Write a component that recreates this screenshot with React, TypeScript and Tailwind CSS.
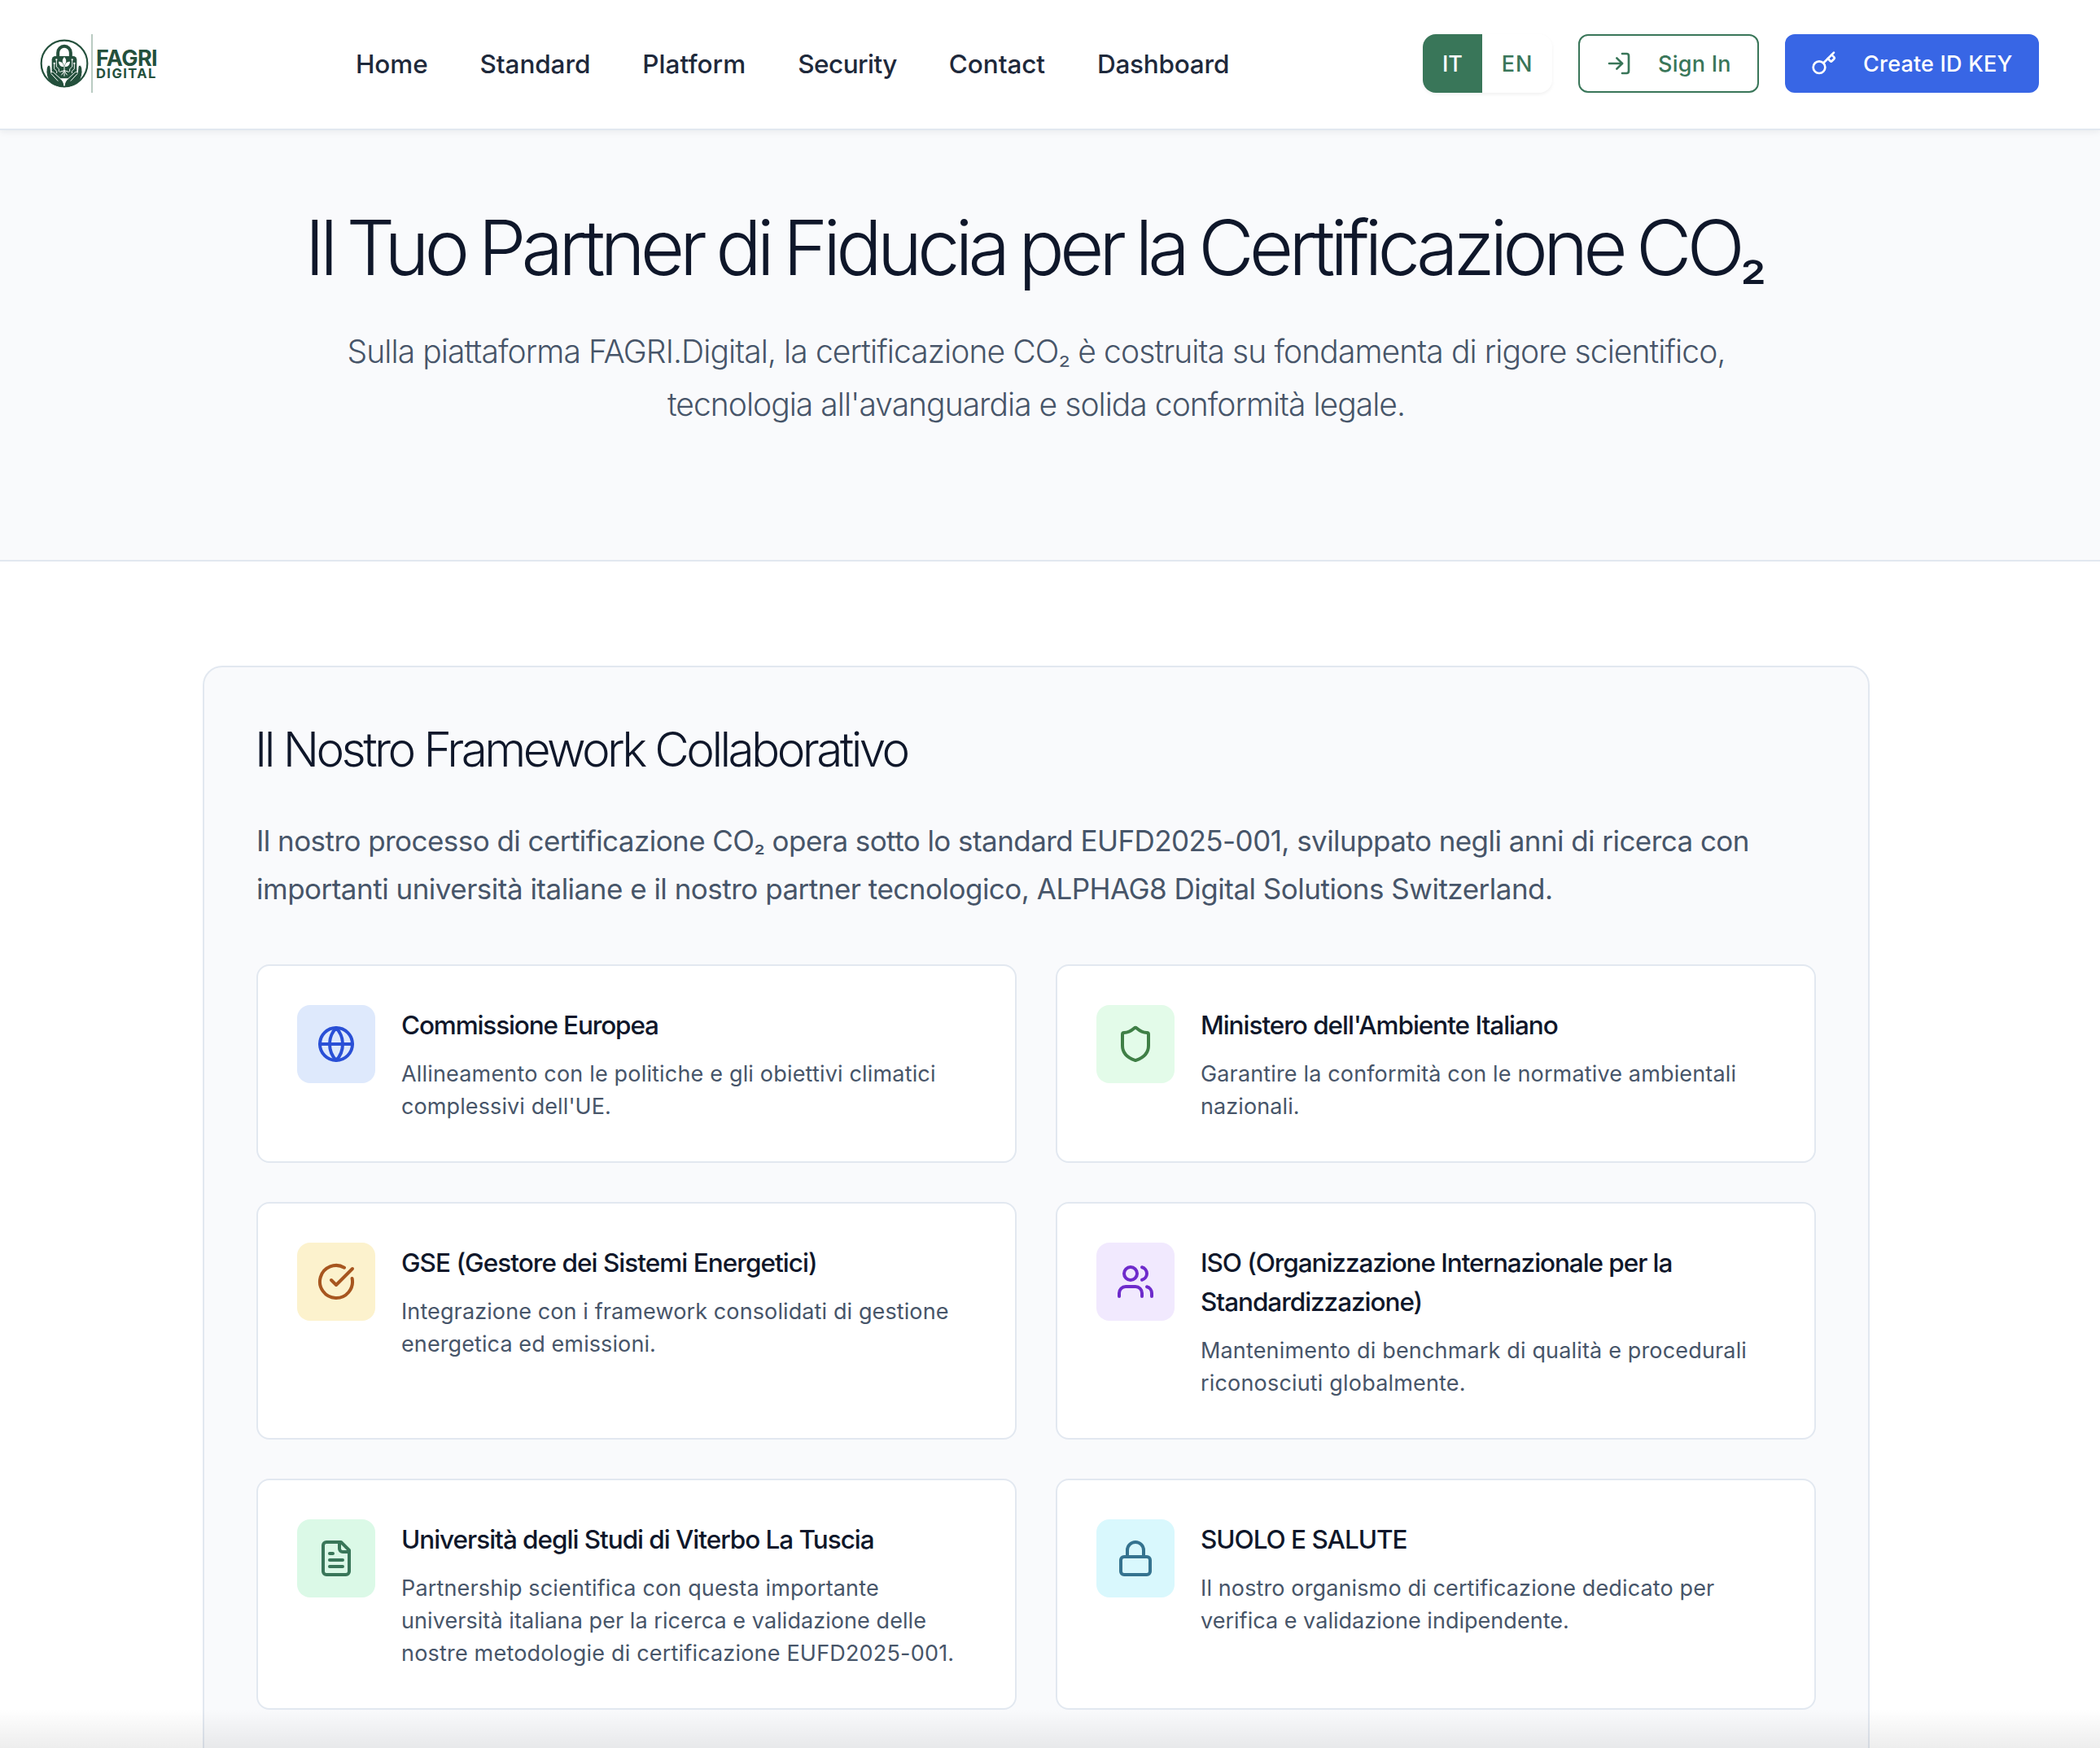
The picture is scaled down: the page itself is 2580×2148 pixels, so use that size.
import type { ReactNode } from "react";
import { CircleCheckBig, Globe, Key, Lock, LogIn, Shield, Users } from "lucide-react";

type Line = { text: string; tracking: string };

function Lines({ lines }: { lines: Line[] }) {
  return (
    <>
      {lines.map((line) => {
        const [before, after] = line.text.split("₂");
        return (
          <span key={line.text} className={`block whitespace-nowrap ${line.tracking}`}>
            {before}
            {after !== undefined && <span className="text-[0.86em] leading-none">₂</span>}
            {after}
          </span>
        );
      })}
    </>
  );
}

function FileIcon() {
  return (
    <svg
      viewBox="0 0 24 24"
      className="size-12"
      fill="none"
      stroke="currentColor"
      strokeWidth="2"
      strokeLinecap="round"
      strokeLinejoin="round"
    >
      <path d="M15 2H6a2 2 0 0 0-2 2v16a2 2 0 0 0 2 2h12a2 2 0 0 0 2-2V7Z" />
      <path d="M14 2v4a2 2 0 0 0 2 2h4" />
      <path d="M10 9H8" />
      <path d="M16 13H8" />
      <path d="M16 17H8" />
    </svg>
  );
}

function LogoMark() {
  return (
    <svg viewBox="26 36 180 180" className="size-[60px]" fill="none" strokeLinecap="round" strokeLinejoin="round">
      {/* padlock */}
      <path d="M92.500 106V86a23.500 23.500 0 0 1 47 0v20" stroke="#24503c" strokeWidth="12" />
      <rect x="70" y="99" width="92" height="82" rx="13" fill="#24503c" />
      {/* hands */}
      <g fill="#24503c" stroke="#fff" strokeWidth="3">
        <path d="M53 136c4-5 11-4 12 4l2 20c2-3 8-4 12 1l24 22c8 7 13 15 13 27v5c-28 0-50-12-61-34c-6-14-7-32-2-45Z" />
        <path d="M179 136c-4-5-11-4-12 4l-2 20c-2-3-8-4-12 1l-24 22c-8 7-13 15-13 27v5c28 0 50-12 61-34c6-14 7-32 2-45Z" />
      </g>
      <path d="M68 164l24 26M164 164l-24 26" stroke="#fff" strokeWidth="3" />
      <circle cx="116" cy="126" r="85" stroke="#24503c" strokeWidth="6.5" />
      <path d="M106 184q9 6 10 24q1-18 10-24" fill="#fff" stroke="#fff" strokeWidth="3" />
      {/* plant */}
      <path d="M116 102c9 10 9 20 0 30c-9-10-9-20 0-30Z" fill="#fff" />
      <path d="M95 119c12 0 18 6 19 19c-12 0-18-7-19-19ZM137 119c-12 0-18 6-19 19c12 0 18-7 19-19Z" fill="#fff" />
      <path d="M116 130v42M116 152l-16 5M116 152l16 5M115 155l-9 13M117 155l9 13" stroke="#fff" strokeWidth="3" />
      {/* circuit traces */}
      <path
        d="M87 114v24l9 8v9M79 128v18l9 8v7M145 114v24l-9 8v9M153 128v18l-9 8v7"
        stroke="#fff"
        strokeWidth="2.8"
      />
      <circle cx="87" cy="112" r="3.4" fill="#fff" />
      <circle cx="79" cy="126" r="3.4" fill="#fff" />
      <circle cx="145" cy="112" r="3.4" fill="#fff" />
      <circle cx="153" cy="126" r="3.4" fill="#fff" />
    </svg>
  );
}

const nav = [
  { label: "Home", tracking: "tracking-[-0.1px]" },
  { label: "Standard", tracking: "tracking-[-0.1px]" },
  { label: "Platform", tracking: "tracking-[0.05px]" },
  { label: "Security", tracking: "tracking-[-0.55px]" },
  { label: "Contact", tracking: "tracking-[-0.1px]" },
  { label: "Dashboard", tracking: "tracking-[-0.23px]" },
];

type Partner = { icon: ReactNode; tone: string; title: Line[]; body: Line[] };

const partners: Partner[] = [
  {
    icon: <Globe className="size-12" />,
    tone: "bg-[#dee9fc] text-[#2a50d6]",
    title: [{ text: "Commissione Europea", tracking: "tracking-[-1.14px]" }],
    body: [
      { text: "Allineamento con le politiche e gli obiettivi climatici", tracking: "tracking-[0.175px]" },
      { text: "complessivi dell'UE.", tracking: "tracking-[0.1px]" },
    ],
  },
  {
    icon: <Shield className="size-12" />,
    tone: "bg-[#e3fbe9] text-[#3f7f46]",
    title: [{ text: "Ministero dell'Ambiente Italiano", tracking: "tracking-[-1.03px]" }],
    body: [
      { text: "Garantire la conformità con le normative ambientali", tracking: "tracking-[0.15px]" },
      { text: "nazionali.", tracking: "tracking-[0.1px]" },
    ],
  },
  {
    icon: <CircleCheckBig className="size-12" />,
    tone: "bg-[#fcf2cd] text-[#a7561f]",
    title: [{ text: "GSE (Gestore dei Sistemi Energetici)", tracking: "tracking-[-0.956px]" }],
    body: [
      { text: "Integrazione con i framework consolidati di gestione", tracking: "tracking-[0.11px]" },
      { text: "energetica ed emissioni.", tracking: "tracking-[0.1px]" },
    ],
  },
  {
    icon: <Users className="size-12" />,
    tone: "bg-[#f1e9fe] text-[#6e2bcb]",
    title: [
      { text: "ISO (Organizzazione Internazionale per la", tracking: "tracking-[-1.07px]" },
      { text: "Standardizzazione)", tracking: "tracking-[-1.04px]" },
    ],
    body: [
      { text: "Mantenimento di benchmark di qualità e procedurali", tracking: "tracking-[0.16px]" },
      { text: "riconosciuti globalmente.", tracking: "tracking-[0.18px]" },
    ],
  },
  {
    icon: <FileIcon />,
    tone: "bg-[#dbf9e7] text-[#397659]",
    title: [{ text: "Università degli Studi di Viterbo La Tuscia", tracking: "tracking-[-1.03px]" }],
    body: [
      { text: "Partnership scientifica con questa importante", tracking: "tracking-[0.15px]" },
      { text: "università italiana per la ricerca e validazione delle", tracking: "tracking-[0.07px]" },
      { text: "nostre metodologie di certificazione EUFD2025-001.", tracking: "tracking-[0.19px]" },
    ],
  },
  {
    icon: <Lock className="size-12" />,
    tone: "bg-[#d9f8fd] text-[#35738f]",
    title: [{ text: "SUOLO E SALUTE", tracking: "tracking-[-1.03px]" }],
    body: [
      { text: "Il nostro organismo di certificazione dedicato per", tracking: "tracking-[0.126px]" },
      { text: "verifica e validazione indipendente.", tracking: "tracking-[0.027px]" },
    ],
  },
];

function Header() {
  return (
    <header className="relative flex h-[160px] items-start border-b-2 border-[#e2e8f0] bg-white pt-[42px] shadow-[0_2px_8px_rgba(15,23,42,0.07)]">
      <a className="ml-[49px] flex h-[72px] w-[388px] items-center">
        <LogoMark />
        <span className="ml-[3px] h-[72px] w-[2px] bg-[#b9cbc2]" />
        <span className="ml-[4px] flex flex-col pt-[2px] font-bold text-[#24503c]">
          <span className="text-[27px] leading-[23px] tracking-[-0.6px]">FAGRI</span>
          <span className="text-[16.5px] leading-[15px] tracking-[1.43px]">DIGITAL</span>
        </span>
      </a>
      <nav className="flex h-[74px] items-center gap-16 text-[31.5px] font-medium text-[#1e293b]">
        {nav.map((item) => (
          <a key={item.label} className={item.tracking}>
            {item.label}
          </a>
        ))}
      </nav>
      <div className="mr-[75px] ml-auto flex gap-8 text-[27px] font-medium">
        <div className="flex h-[72px] w-[159px] overflow-hidden rounded-2xl bg-white text-[#397659] shadow-[0_2px_4px_rgba(0,0,0,0.06)]">
          <button className="w-[73px] bg-[#397659] pt-0.5 text-white">IT</button>
          <button className="grow pt-0.5 tracking-[1px]">EN</button>
        </div>
        <button className="flex h-[72px] w-[222px] items-center gap-8 rounded-xl border-2 border-[#397659] pl-8 whitespace-nowrap text-[#397659]">
          <LogIn className="size-8 shrink-0" />
          <span className="pt-0.5 tracking-[0.25px]">Sign In</span>
        </button>
        <button className="flex h-[72px] w-[312px] items-center gap-8 rounded-xl bg-[#3866e5] pl-8 whitespace-nowrap text-white">
          <Key className="size-8 shrink-0" />
          <span className="pt-0.5 tracking-[0.2px]">Create ID KEY</span>
        </button>
      </div>
    </header>
  );
}

function PartnerCard({ partner }: { partner: Partner }) {
  return (
    <article className="flex gap-8 rounded-2xl border-2 border-[#e2e8f0] bg-white p-12 pb-[47px]">
      <div className={`flex size-24 shrink-0 items-center justify-center rounded-2xl ${partner.tone}`}>
        {partner.icon}
      </div>
      <div className="pt-px">
        <h3 className="text-[31.5px] leading-[48px] font-medium text-[#0f172a]">
          <Lines lines={partner.title} />
        </h3>
        <p className="mt-4 text-[27px] leading-[40px] text-[#475569]">
          <Lines lines={partner.body} />
        </p>
      </div>
    </article>
  );
}

export default function App() {
  return (
    <div className="relative h-[2148px] w-[2580px] overflow-hidden bg-white font-['Inter',sans-serif]">
      <Header />
      <section className="h-[530px] border-b-2 border-[#e2e8f0] bg-[#f9fafc] pt-24 pr-[34px] text-center font-light">
        <h1 className="mr-[7px] h-24 text-[94px] leading-[96px] tracking-[-6.05px] whitespace-nowrap text-[#0f172a] [word-spacing:-4px]">
          Il Tuo Partner di Fiducia per la Certificazione CO
          <span className="text-[74px] leading-none font-normal">₂</span>
        </h1>
        <p className="mt-[47px] text-[39px] leading-[65px] text-[#475569]">
          <Lines
            lines={[
              {
                text: "Sulla piattaforma FAGRI.Digital, la certificazione CO₂ è costruita su fondamenta di rigore scientifico,",
                tracking: "tracking-[-0.9px]",
              },
              { text: "tecnologia all'avanguardia e solida conformità legale.", tracking: "tracking-[-0.967px]" },
            ]}
          />
        </p>
      </section>
      <main className="pt-32 pl-[249px]">
        <section className="h-[1500px] w-[2048px] rounded-3xl border-2 border-[#e2e8f0] bg-[#f9fafc] p-16">
          <h2 className="-ml-[2px] h-[72px] pt-px text-[58.5px] leading-[72px] font-light tracking-[-3.59px] whitespace-nowrap text-[#0f172a]">
            Il Nostro Framework Collaborativo
          </h2>
          <p className="mt-12 text-[35px] leading-[58.5px] text-[#475569]">
            <Lines
              lines={[
                {
                  text: "Il nostro processo di certificazione CO₂ opera sotto lo standard EUFD2025-001, sviluppato negli anni di ricerca con",
                  tracking: "tracking-[-0.555px]",
                },
                {
                  text: "importanti università italiane e il nostro partner tecnologico, ALPHAG8 Digital Solutions Switzerland.",
                  tracking: "tracking-[-0.504px]",
                },
              ]}
            />
          </p>
          <div className="mt-16 grid grid-cols-2 gap-12">
            {partners.map((partner) => (
              <PartnerCard key={partner.title[0].text} partner={partner} />
            ))}
          </div>
        </section>
      </main>
      <div className="pointer-events-none absolute inset-x-0 bottom-0 h-12 bg-linear-to-b from-transparent to-black/7" />
    </div>
  );
}
